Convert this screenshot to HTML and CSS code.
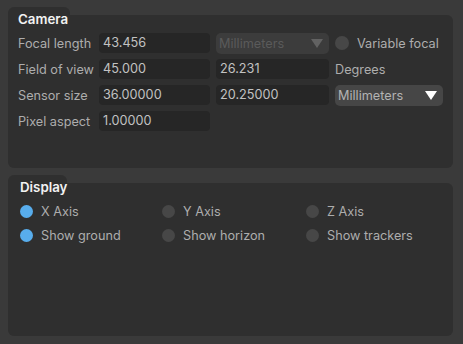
FILE: index.html
```html
<!DOCTYPE html>
<html>
<head>
<meta charset="utf-8">
<link rel="stylesheet" href="styles.css">
</head>
<body>
<div class="page">
  <section class="group">
    <div class="tab tab-camera"></div>
    <div class="panel panel-camera">
      <div class="title">Camera</div>
      <div class="grid">
        <div class="label">Focal length</div>
        <div class="field">43.456</div>
        <div class="select disabled"><span>Millimeters</span><span class="arrow"></span></div>
        <div class="check"><span class="radio"></span><span class="label">Variable focal</span></div>

        <div class="label">Field of view</div>
        <div class="field">45.000</div>
        <div class="field">26.231</div>
        <div class="label">Degrees</div>

        <div class="label">Sensor size</div>
        <div class="field">36.00000</div>
        <div class="field">20.25000</div>
        <div class="select"><span>Millimeters</span><span class="arrow"></span></div>

        <div class="label">Pixel aspect</div>
        <div class="field">1.00000</div>
      </div>
    </div>
  </section>
  <section class="group">
    <div class="tab tab-display"></div>
    <div class="panel panel-display">
      <div class="title">Display</div>
      <div class="options">
        <div class="check"><span class="radio on"></span><span class="label">X Axis</span></div>
        <div class="check"><span class="radio"></span><span class="label">Y Axis</span></div>
        <div class="check"><span class="radio"></span><span class="label">Z Axis</span></div>
        <div class="check"><span class="radio on"></span><span class="label">Show ground</span></div>
        <div class="check"><span class="radio"></span><span class="label">Show horizon</span></div>
        <div class="check"><span class="radio"></span><span class="label">Show trackers</span></div>
      </div>
    </div>
  </section>
</div>
</body>
</html>
```
FILE: styles.css
```css
html, body {
  margin: 0;
  padding: 0;
  background: #3a3a3a;
}
body {
  width: 463px;
  height: 344px;
  overflow: hidden;
  font-family: "Inter", "Liberation Sans", sans-serif;
  font-size: 12.7px;
  color: #adadad;
}
.page {
  padding: 7px 10px 8px 8px;
  display: flex;
  flex-direction: column;
  gap: 7px;
}
.group {
  display: flex;
  flex-direction: column;
}
.tab {
  height: 8px;
  background: #2f2f2f;
  border-radius: 6px 6px 0 0;
}
.tab-camera { width: 62px; }
.tab-display { width: 59px; }
.panel {
  background: #2f2f2f;
  border-radius: 0 6px 6px 6px;
}
.panel-camera {
  height: 153px;
  padding: 0 10px;
  box-sizing: border-box;
}
.panel-display {
  height: 153px;
  padding: 0 12px;
  box-sizing: border-box;
}
.title {
  margin-top: -3px;
  height: 14px;
  line-height: 14px;
  font-size: 13.3px;
  font-weight: 600;
  color: #f2f2f2;
}
.grid {
  margin-top: 7px;
  display: grid;
  grid-template-columns: 75px 111px 113px 108px;
  grid-auto-rows: 20px;
  column-gap: 6px;
  row-gap: 6px;
  align-items: center;
}
.label {
  white-space: nowrap;
  color: #adadad;
}
.field {
  height: 20px;
  line-height: 20px;
  background: #262626;
  border-radius: 4px;
  padding-left: 4px;
  color: #c2c2c2;
}
.select {
  height: 21px;
  background: #464646;
  border-radius: 5px;
  padding: 0 6px 0 3px;
  display: flex;
  align-items: center;
  justify-content: space-between;
  color: #b3b3b3;
}
.select .arrow {
  width: 0;
  height: 0;
  border-left: 6px solid transparent;
  border-right: 6px solid transparent;
  border-top: 9px solid #ffffff;
}
.select.disabled {
  background: #3c3c3c;
  color: #5a5a5a;
}
.select.disabled .arrow {
  border-top-color: #626262;
}
.check {
  display: flex;
  align-items: center;
  gap: 8px;
}
.radio {
  width: 14px;
  height: 14px;
  border-radius: 50%;
  background: #474747;
  flex: none;
}
.radio.on {
  background: #58adec;
}
.options {
  margin-top: 8px;
  display: grid;
  grid-template-columns: 142px 144px auto;
  grid-auto-rows: 18px;
  row-gap: 6px;
  align-items: center;
}
.options .radio {
  width: 13px;
  height: 13px;
}
```
